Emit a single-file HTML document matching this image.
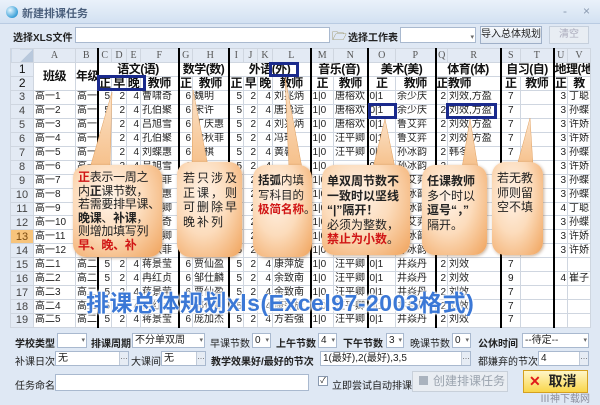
<!DOCTYPE html>
<html><head><meta charset="utf-8"><style>
*{margin:0;padding:0;box-sizing:border-box}
body{width:600px;height:401px;overflow:hidden;background:#dfe8f4;font-family:"Liberation Sans","Noto Sans CJK SC",sans-serif;font-size:11px;color:#222;position:relative}
.abs{position:absolute;white-space:nowrap}
.title{left:0;top:0;width:600px;height:24px;background:linear-gradient(#eaf1fa,#d3e1f2);border-bottom:1px solid #b9cbe2}
.b{font-weight:bold}
.inp{position:absolute;background:#fff;border:1px solid #a9b9cf;height:15px;font-size:10px;line-height:13px;padding-left:2px;white-space:nowrap;overflow:hidden}
.dd{position:absolute;right:1px;top:0;font-size:7px;color:#666}
.btn3{position:absolute;right:0;top:0;width:9px;height:13px;background:#e6ecf4;border-left:1px solid #c0cad8;font-size:8px;text-align:center;line-height:10px;color:#555}
table{position:absolute;left:10px;top:48px;border-collapse:collapse;table-layout:fixed;width:580px;background:#fff}
td{border:1px solid #cfd6e0;font-size:10px;line-height:12px;white-space:nowrap;overflow:hidden;padding:0 1px;height:13.94px}
tr.h td{background:#e3eaf4;color:#555;text-align:center;height:14px;font-family:"Liberation Serif","Noto Serif CJK SC",serif}
tr.s td{font-weight:bold;font-size:12px;text-align:center;height:14px;line-height:13px;color:#111;padding:0;letter-spacing:-0.5px}
td.rn{background:#e3eaf4;text-align:center;color:#444;font-size:11px}
.k{border-left:2px solid #000}
.r{text-align:right}
.c{text-align:center}
.box{position:absolute;border:3px solid #1a2a8c}
.co{position:absolute;border-radius:13px;background:radial-gradient(ellipse at 40% 35%,#fff3e8 0%,#fcdcbc 45%,#f0a25a 100%);box-shadow:1px 1px 3px rgba(120,60,0,.4);font-size:11.5px;line-height:14.5px;color:#222;padding:8px 5px;white-space:nowrap}
.red{color:#d01515;font-weight:bold}
.lb{font-weight:bold;font-size:10px}
.ln{font-size:10px}
</style></head><body>
<div class="abs title"></div>
<div class="abs" style="left:6px;top:6px;width:12px;height:12px;border-radius:50%;background:radial-gradient(circle at 35% 35%,#e8f7ff,#3aa0d8 70%,#1f6fa8)"></div>
<div class="abs b" style="left:22px;top:5px;font-size:11px;color:#4a5f7c">新建排课任务</div>
<div class="abs" style="left:563px;top:4px;color:#8a9ab0;font-size:12px">-</div>
<div class="abs" style="left:583px;top:4px;color:#8a9ab0;font-size:12px">×</div>

<div class="abs lb" style="left:13px;top:29px">选择XLS文件</div>
<div class="inp" style="left:75px;top:27px;width:255px;height:16px"></div>
<div class="abs" style="left:332px;top:27px;font-size:12px;color:#7a6a20">🗁</div>
<div class="abs lb" style="left:348px;top:29px">选择工作表</div>
<div class="inp" style="left:400px;top:27px;width:76px;height:16px"><span class="dd" style="top:3px">▾</span></div>
<div class="abs" style="left:480px;top:26px;width:62px;height:18px;background:linear-gradient(#f6f9fd,#dfe7f1);border:1px solid #9fb0c8;font-size:10px;text-align:center;line-height:16px">导入总体规划</div>
<div class="abs" style="left:549px;top:26px;width:40px;height:18px;background:#e8edf3;border:1px solid #c5cfdc;font-size:10px;text-align:center;line-height:16px;color:#aab">清空</div>

<table>
<colgroup><col style="width:23px"><col style="width:42px"><col style="width:22px"><col style="width:14px"><col style="width:15px"><col style="width:14px"><col style="width:38px"><col style="width:14px"><col style="width:36px"><col style="width:15px"><col style="width:14px"><col style="width:15px"><col style="width:38px"><col style="width:23px"><col style="width:34px"><col style="width:28px"><col style="width:40px"><col style="width:12px"><col style="width:53px"><col style="width:20px"><col style="width:33px"><col style="width:14px"><col style="width:23px"></colgroup>
<tr class="h"><td style="background:linear-gradient(135deg,#dfe7f2 60%,#b8c8dc 60%)"></td><td>A</td><td>B</td><td class="k">C</td><td>D</td><td>E</td><td>F</td><td class="k">G</td><td>H</td><td class="k">I</td><td>J</td><td>K</td><td>L</td><td class="k">M</td><td>N</td><td class="k">O</td><td>P</td><td class="k">Q</td><td>R</td><td class="k">S</td><td>T</td><td class="k">U</td><td>V</td></tr>
<tr class="s"><td class="rn" style="font-weight:normal">1</td><td rowspan="2">班级</td><td rowspan="2" style="overflow:visible">年级</td><td colspan="4" class="k">语文(语)</td><td colspan="2" class="k">数学(数)</td><td colspan="4" class="k">外语(外)</td><td colspan="2" class="k">音乐(音)</td><td colspan="2" class="k">美术(美)</td><td colspan="2" class="k">体育(体)</td><td colspan="2" class="k">自习(自)</td><td colspan="2" class="k" style="text-align:left">地理(地</td></tr>
<tr class="s"><td class="rn" style="font-weight:normal">2</td><td class="k">正</td><td>早</td><td>晚</td><td>教师</td><td class="k">正</td><td>教师</td><td class="k">正</td><td>早</td><td>晚</td><td>教师</td><td class="k">正</td><td>教师</td><td class="k">正</td><td>教师</td><td class="k">正</td><td style="text-align:left">教师</td><td class="k">正</td><td>教师</td><td class="k">正</td><td>教</td></tr>
<tr><td class="rn">3</td><td>高一1</td><td>高一</td><td class="k r">5</td><td class="r">2</td><td class="r">4</td><td>曹啸奇</td><td class="k r">6</td><td>魏明</td><td class="k r">5</td><td class="r">2</td><td class="r">4</td><td>刘兆炳</td><td class="k">1|0</td><td>唐榕欢</td><td class="k">0|1</td><td>余少庆</td><td class="k r">2</td><td>刘效,方盈</td><td class="k c">7</td><td></td><td class="k r">3</td><td>丁聪</td></tr>
<tr><td class="rn">4</td><td>高一2</td><td>高一</td><td class="k r">5</td><td class="r">2</td><td class="r">4</td><td>孔伯聚</td><td class="k r">6</td><td>宋许</td><td class="k r">5</td><td class="r">2</td><td class="r">4</td><td>唐逸远</td><td class="k">1|0</td><td>唐榕欢</td><td class="k">0|1</td><td>余少庆</td><td class="k r">2</td><td>刘效,方盈</td><td class="k c">7</td><td></td><td class="k r">3</td><td>孙蝶</td></tr>
<tr><td class="rn">5</td><td>高一3</td><td>高一</td><td class="k r">5</td><td class="r">2</td><td class="r">4</td><td>吕旭雪</td><td class="k r">6</td><td>丁庆惠</td><td class="k r">5</td><td class="r">2</td><td class="r">4</td><td>刘兆炳</td><td class="k">1|0</td><td>唐榕欢</td><td class="k">0|1</td><td>鲁艾弈</td><td class="k r">2</td><td>刘效,方盈</td><td class="k c">7</td><td></td><td class="k r">3</td><td>许娇</td></tr>
<tr><td class="rn">6</td><td>高一4</td><td>高一</td><td class="k r">5</td><td class="r">2</td><td class="r">4</td><td>孔伯聚</td><td class="k r">6</td><td>沈秋菲</td><td class="k r">5</td><td class="r">2</td><td class="r">4</td><td>冯琪</td><td class="k">1|0</td><td>汪平卿</td><td class="k">0|1</td><td>鲁艾弈</td><td class="k r">2</td><td>刘效,方盈</td><td class="k c">7</td><td></td><td class="k r">3</td><td>许娇</td></tr>
<tr><td class="rn">7</td><td>高一5</td><td>高一</td><td class="k r">5</td><td class="r">2</td><td class="r">4</td><td>刘蝶惠</td><td class="k r">6</td><td>书棋</td><td class="k r">5</td><td class="r">2</td><td class="r">4</td><td>黄馨</td><td class="k">1|0</td><td>汪平卿</td><td class="k">0|1</td><td>孙冰韵</td><td class="k r">2</td><td>韩冬</td><td class="k c">7</td><td></td><td class="k r">3</td><td>孙蝶</td></tr>
<tr><td class="rn">8</td><td>高一6</td><td>高一</td><td class="k r">5</td><td class="r">2</td><td class="r">4</td><td>吕旭雪</td><td class="k r">6</td><td></td><td class="k r">5</td><td class="r">2</td><td class="r">4</td><td></td><td class="k">1|0</td><td></td><td class="k">0|1</td><td>孙冰韵</td><td class="k r">2</td><td></td><td class="k c">7</td><td></td><td class="k r">3</td><td>许娇</td></tr>
<tr><td class="rn">9</td><td>高一7</td><td>高一</td><td class="k r">5</td><td class="r">2</td><td class="r">4</td><td>沈秋菲</td><td class="k r">6</td><td></td><td class="k r">5</td><td class="r">2</td><td class="r">4</td><td></td><td class="k">1|0</td><td></td><td class="k">0|1</td><td>鲁艾弈</td><td class="k r">2</td><td></td><td class="k c">7</td><td></td><td class="k r">3</td><td>孙蝶</td></tr>
<tr><td class="rn">10</td><td>高一8</td><td>高一</td><td class="k r">5</td><td class="r">2</td><td class="r">4</td><td>刘蝶惠</td><td class="k r">6</td><td></td><td class="k r">5</td><td class="r">2</td><td class="r">4</td><td></td><td class="k">1|0</td><td></td><td class="k">0|1</td><td>孙冰韵</td><td class="k r">2</td><td></td><td class="k c">7</td><td></td><td class="k r">3</td><td>孙蝶</td></tr>
<tr><td class="rn">11</td><td>高一9</td><td>高一</td><td class="k r">5</td><td class="r">2</td><td class="r">4</td><td>汪平卿</td><td class="k r">6</td><td></td><td class="k r">5</td><td class="r">2</td><td class="r">4</td><td></td><td class="k">1|0</td><td></td><td class="k">0|1</td><td>孙冰韵</td><td class="k r">2</td><td></td><td class="k c">7</td><td></td><td class="k r">4</td><td>丁聪</td></tr>
<tr><td class="rn">12</td><td>高一10</td><td>高一</td><td class="k r">5</td><td class="r">2</td><td class="r">4</td><td>曹啸奇</td><td class="k r">6</td><td></td><td class="k r">5</td><td class="r">2</td><td class="r">4</td><td></td><td class="k">1|0</td><td></td><td class="k">0|1</td><td>鲁艾弈</td><td class="k r">2</td><td></td><td class="k c">7</td><td></td><td class="k r">3</td><td>孙蝶</td></tr>
<tr><td class="rn" style="background:#f7c47c;color:#7a4a10">13</td><td>高一11</td><td>高一</td><td class="k r">5</td><td class="r">2</td><td class="r">4</td><td>汪平卿</td><td class="k r">6</td><td></td><td class="k r">5</td><td class="r">2</td><td class="r">4</td><td></td><td class="k">1|0</td><td></td><td class="k">0|1</td><td>孙冰韵</td><td class="k r">2</td><td></td><td class="k c">7</td><td></td><td class="k r">3</td><td>许娇</td></tr>
<tr><td class="rn">14</td><td>高一12</td><td>高一</td><td class="k r">5</td><td class="r">2</td><td class="r">4</td><td>沈秋菲</td><td class="k r">6</td><td></td><td class="k r">5</td><td class="r">2</td><td class="r">4</td><td></td><td class="k">1|0</td><td></td><td class="k">0|1</td><td>孙冰韵</td><td class="k r">2</td><td></td><td class="k c">7</td><td></td><td class="k r">3</td><td>许娇</td></tr>
<tr><td class="rn">15</td><td>高二1</td><td>高二</td><td class="k r">5</td><td class="r">2</td><td class="r">4</td><td>蒋景莹</td><td class="k r">6</td><td>贾仙盈</td><td class="k r">5</td><td class="r">2</td><td class="r">4</td><td>康萍旋</td><td class="k">1|0</td><td>汪平卿</td><td class="k">0|1</td><td>井焱丹</td><td class="k r">2</td><td>刘效</td><td class="k c">7</td><td></td><td class="k"></td><td></td></tr>
<tr><td class="rn">16</td><td>高二2</td><td>高二</td><td class="k r">5</td><td class="r">2</td><td class="r">4</td><td>冉红贞</td><td class="k r">6</td><td>邹仕麟</td><td class="k r">5</td><td class="r">2</td><td class="r">4</td><td>余致南</td><td class="k">1|0</td><td>汪平卿</td><td class="k">0|1</td><td>井焱丹</td><td class="k r">2</td><td>刘效</td><td class="k c">9</td><td></td><td class="k r">4</td><td>崔子</td></tr>
<tr><td class="rn">17</td><td>高二3</td><td>高二</td><td class="k r">5</td><td class="r">2</td><td class="r">4</td><td>蒋景莹</td><td class="k r">6</td><td>贾仙盈</td><td class="k r">5</td><td class="r">2</td><td class="r">4</td><td>余致南</td><td class="k">1|0</td><td>汪平卿</td><td class="k">0|1</td><td>井焱丹</td><td class="k r">2</td><td>刘效</td><td class="k c">7</td><td></td><td class="k"></td><td></td></tr>
<tr><td class="rn">18</td><td>高二4</td><td>高二</td><td class="k r">5</td><td class="r">2</td><td class="r">4</td><td>冉红贞</td><td class="k r">6</td><td>邹仕麟</td><td class="k r">5</td><td class="r">2</td><td class="r">4</td><td>康萍旋</td><td class="k">1|0</td><td>汪平卿</td><td class="k">0|1</td><td>井焱丹</td><td class="k r">2</td><td>刘效</td><td class="k c">7</td><td></td><td class="k"></td><td></td></tr>
<tr><td class="rn">19</td><td>高二5</td><td>高二</td><td class="k r">5</td><td class="r">2</td><td class="r">4</td><td>蒋景莹</td><td class="k r">6</td><td>庞加杰</td><td class="k r">5</td><td class="r">2</td><td class="r">4</td><td>方若强</td><td class="k">1|0</td><td>汪平卿</td><td class="k">0|1</td><td>井焱丹</td><td class="k r">2</td><td>刘效</td><td class="k c">7</td><td></td><td class="k"></td><td></td></tr>
</table>

<div class="box" style="left:97px;top:75px;width:49px;height:16px"></div>
<div class="box" style="left:269px;top:62px;width:30px;height:15px"></div>
<div class="box" style="left:368px;top:103px;width:29px;height:16px"></div>
<div class="box" style="left:446px;top:103px;width:51px;height:16px"></div>

<svg class="abs" style="left:0;top:0" width="600" height="401">
<defs><linearGradient id="tg" x1="0" y1="0" x2="0" y2="1"><stop offset="0" stop-color="#fbe2c8"/><stop offset="1" stop-color="#f6c08a"/></linearGradient></defs>
<g fill="url(#tg)" stroke="#e0a060" stroke-width=".5">
<polygon points="90,168 112,92 110,168"/>
<polygon points="192,166 193,90 208,166"/>
<polygon points="289,168 285,77 302,168"/>
<polygon points="373,168 385,119 395,168"/>
<polygon points="462,168 470,119 478,168"/>
<polygon points="517,166 530,118 533,166"/>
</g></svg>

<div class="co" style="left:73px;top:165px;width:89px;height:92px;padding:6px 5px;font-size:12px;line-height:13.6px;letter-spacing:-0.3px"><span class="red">正</span>表示一周之<br>内<b>正</b>课节数，<br>若需要排早课、<br><b>晚课</b>、<b>补课</b>，<br>则增加填写列<br><span class="red">早、晚、补</span></div>
<div class="co" style="left:177px;top:162px;width:65px;height:95px;padding:9px 6px;letter-spacing:2px;font-size:12px">若只涉及<br>正课，则<br>可删除早<br>晚补列</div>
<div class="co" style="left:253px;top:165px;width:59px;height:92px;padding:9px 5px;font-size:11.5px"><b>括弧</b>内填<br>写科目的<br><span class="red">极简名称</span>。</div>
<div class="co" style="left:322px;top:165px;width:88px;height:90px;padding:9px 5px;font-size:12px"><b>单双周节数不<br>一致时以坚线<br>“|”隔开！</b><br>必须为整数，<br><span class="red">禁止为小数</span>。</div>
<div class="co" style="left:422px;top:165px;width:65px;height:90px;padding:9px 5px;font-size:12px"><b>任课教师</b><br>多个时以<br><b>逗号“，”</b><br>隔开。</div>
<div class="co" style="left:492px;top:162px;width:51px;height:93px;padding:9px 5px;font-size:12px">若无教<br>师则留<br>空不填</div>

<div class="abs" style="left:86px;top:284px;font-size:23px;font-weight:bold;color:#3b78d6;letter-spacing:0.5px;text-shadow:0 0 2px #fff,0 0 3px #fff,1px 1px 2px #fff,-1px -1px 2px #fff">排课总体规划xls(Excel97-2003格式)</div>

<div class="abs lb" style="left:15px;top:335px">学校类型</div>
<div class="inp" style="left:57px;top:333px;width:30px"><span class="dd">▾</span></div>
<div class="abs lb" style="left:91px;top:335px">排课周期</div>
<div class="inp" style="left:132px;top:333px;width:73px">不分单双周<span class="dd">▾</span></div>
<div class="abs ln" style="left:210px;top:335px">早课节数</div>
<div class="inp" style="left:252px;top:333px;width:19px">0<span class="dd">▾</span></div>
<div class="abs lb" style="left:276px;top:335px">上午节数</div>
<div class="inp" style="left:318px;top:333px;width:19px">4<span class="dd">▾</span></div>
<div class="abs lb" style="left:343px;top:335px">下午节数</div>
<div class="inp" style="left:386px;top:333px;width:18px">3<span class="dd">▾</span></div>
<div class="abs ln" style="left:410px;top:335px">晚课节数</div>
<div class="inp" style="left:452px;top:333px;width:19px">0<span class="dd">▾</span></div>
<div class="abs lb" style="left:478px;top:335px">公休时间</div>
<div class="inp" style="left:522px;top:333px;width:67px">--待定--<span class="dd">▾</span></div>

<div class="abs ln" style="left:15px;top:353px">补课日次</div>
<div class="inp" style="left:55px;top:351px;width:74px">无<span class="btn3">…</span></div>
<div class="abs ln" style="left:131px;top:353px">大课间</div>
<div class="inp" style="left:161px;top:351px;width:45px">无<span class="btn3">…</span></div>
<div class="abs lb" style="left:211px;top:353px">教学效果好/最好的节次</div>
<div class="inp" style="left:320px;top:351px;width:151px">1(最好),2(最好),3,5<span class="btn3">…</span></div>
<div class="abs ln" style="left:478px;top:353px">都嫌弃的节次</div>
<div class="inp" style="left:538px;top:351px;width:51px">4<span class="btn3">…</span></div>

<div class="abs ln" style="left:15px;top:377px">任务命名</div>
<div class="inp" style="left:55px;top:374px;width:254px;height:17px"></div>
<div class="abs" style="left:318px;top:376px;width:10px;height:10px;border:1px solid #8a9ab0;background:#fff;font-size:8px;line-height:8px;text-align:center">✓</div>
<div class="abs ln" style="left:332px;top:377px">立即尝试自动排课</div>
<div class="abs" style="left:412px;top:371px;width:96px;height:21px;background:#e9edf2;border:1px solid #c8d0da;color:#9aa3ae;font-size:12px;line-height:19px;padding-left:6px"><span style="display:inline-block;width:9px;height:9px;background:#aab3be;margin-right:5px"></span>创建排课任务</div>
<div class="abs" style="left:523px;top:370px;width:65px;height:23px;background:linear-gradient(#fff6c8,#f9d64a);border:1px solid #d4a020;font-size:14px;font-weight:bold;line-height:21px;padding-left:5px"><span style="color:#e01a1a">✕</span>&nbsp;&nbsp;取消</div>
<div class="abs" style="left:540px;top:390px;font-size:10px;color:#667;opacity:.7">Ⅲ神下载网</div>
</body></html>
